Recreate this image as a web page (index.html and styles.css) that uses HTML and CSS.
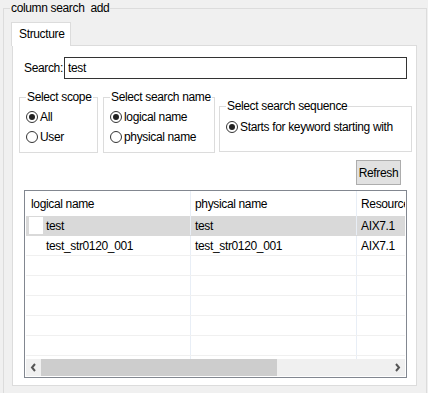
FILE: index.html
```html
<!DOCTYPE html>
<html lang="en">
<head>
    <meta charset="UTF-8">
    <meta name="viewport" content="width=device-width, initial-scale=1.0">
    <title>column search add</title>
    <link rel="stylesheet" href="styles.css">
</head>
<body>
    <fieldset class="outer">
        <legend>column search&nbsp; add</legend>

        <!-- Tab strip -->
        <div class="tabs">
            <div class="tab active">Structure</div>
        </div>

        <div class="panel">
            <!-- Search box -->
            <div class="search-row">
                <label for="keyword">Search:</label>
                <input type="text" id="keyword" value="test">
            </div>

            <!-- Option groups -->
            <div class="options">
                <fieldset class="group scope">
                    <legend>Select scope</legend>
                    <div class="radio checked"><span class="dot"></span>All</div>
                    <div class="radio"><span class="dot"></span>User</div>
                </fieldset>
                <fieldset class="group name">
                    <legend>Select search name</legend>
                    <div class="radio checked"><span class="dot"></span>logical name</div>
                    <div class="radio"><span class="dot"></span>physical name</div>
                </fieldset>
                <fieldset class="group sequence">
                    <legend>Select search sequence</legend>
                    <div class="radio checked"><span class="dot"></span>Starts for keyword starting with</div>
                </fieldset>
            </div>

            <div class="actions">
                <button class="btn">Refresh</button>
            </div>

            <!-- Result grid -->
            <div class="grid">
                <div class="grid-view">
                    <div class="row head">
                        <div class="cell c1">logical name</div>
                        <div class="cell c2">physical name</div>
                        <div class="cell c3">Resource</div>
                    </div>
                    <div class="row selected">
                        <div class="cell c1 indent"><span class="icon"></span>test</div>
                        <div class="cell c2">test</div>
                        <div class="cell c3">AIX7.1</div>
                    </div>
                    <div class="row">
                        <div class="cell c1 indent">test_str0120_001</div>
                        <div class="cell c2">test_str0120_001</div>
                        <div class="cell c3">AIX7.1</div>
                    </div>
                    <div class="row"><div class="cell c1"></div><div class="cell c2"></div><div class="cell c3"></div></div>
                    <div class="row"><div class="cell c1"></div><div class="cell c2"></div><div class="cell c3"></div></div>
                    <div class="row"><div class="cell c1"></div><div class="cell c2"></div><div class="cell c3"></div></div>
                    <div class="row"><div class="cell c1"></div><div class="cell c2"></div><div class="cell c3"></div></div>
                    <div class="row"><div class="cell c1"></div><div class="cell c2"></div><div class="cell c3"></div></div>
                    <div class="row"><div class="cell c1"></div><div class="cell c2"></div><div class="cell c3"></div></div>
                </div>
                <div class="hscroll">
                    <div class="arrow">
                        <svg width="7" height="9" viewBox="0 0 7 9"><path d="M5 1 L2 4.5 L5 8" fill="none" stroke="#555" stroke-width="2"/></svg>
                    </div>
                    <div class="track">
                        <div class="thumb"></div>
                    </div>
                    <div class="arrow">
                        <svg width="7" height="9" viewBox="0 0 7 9"><path d="M2 1 L5 4.5 L2 8" fill="none" stroke="#555" stroke-width="2"/></svg>
                    </div>
                </div>
            </div>
        </div>
    </fieldset>
</body>
</html>
```

FILE: styles.css
```css
body {
    font-family: "Liberation Sans", Arial, sans-serif;
    font-size: 12px;
    letter-spacing: -0.35px;
    margin: 0;
    padding: 0;
    background-color: #f0f0f0;
    color: #000;
    width: 428px;
    height: 393px;
    overflow: hidden;
}
legend {
    padding: 0 1px;
    line-height: 16px;
    white-space: nowrap;
}
.outer {
    margin: 0 1px 0 3px;
    padding: 6px 9px 20px 6px;
    border: 1px solid #dcdcdc;
    min-width: 0;
}
.tabs {
    display: flex;
    margin-left: 1px;
}
.tab {
    position: relative;
    width: 60px;
    height: 24px;
    box-sizing: border-box;
    padding: 4px 0 0 7px;
    border: 1px solid #dcdcdc;
    border-bottom: none;
    background-color: #fff;
    margin-bottom: -1px;
    z-index: 1;
}
.panel {
    height: 341px;
    box-sizing: border-box;
    margin-left: 2px;
    border: 1px solid #dcdcdc;
    background-color: #fff;
    padding: 11px 9px 0 11px;
}
.search-row {
    display: flex;
    align-items: center;
    height: 22px;
}
.search-row label {
    width: 40px;
    flex: none;
}
.search-row input {
    flex: 1;
    min-width: 0;
    height: 22px;
    box-sizing: border-box;
    border: 1px solid #333;
    padding: 0 3px;
    font-family: inherit;
    font-size: 12px;
    letter-spacing: -0.35px;
    outline: none;
}
.options {
    display: flex;
    align-items: flex-start;
    gap: 5px;
    margin: 10px 0 0 -5px;
}
.group {
    flex: none;
    margin: 0;
    border: 1px solid #dcdcdc;
    padding: 2px 4px 4px 6px;
    min-width: 0;
    box-sizing: border-box;
}
.scope { width: 79px; height: 64px; }
.name { width: 112px; height: 64px; }
.sequence {
    width: 193px;
    height: 54px;
    margin-top: 9px;
    margin-left: -1px;
    padding-top: 3px;
}
.radio {
    display: flex;
    align-items: center;
    height: 20px;
    white-space: nowrap;
}
.dot {
    flex: none;
    width: 12px;
    height: 12px;
    box-sizing: border-box;
    border: 1px solid #333;
    border-radius: 50%;
    margin-right: 2px;
    display: flex;
    align-items: center;
    justify-content: center;
}
.checked .dot::after {
    content: "";
    width: 6px;
    height: 6px;
    border-radius: 50%;
    background-color: #222;
}
.actions {
    display: flex;
    justify-content: flex-end;
    margin: 7px 6px 0 0;
}
.btn {
    width: 45px;
    height: 25px;
    background-color: #e1e1e1;
    border: 1px solid #adadad;
    font-family: inherit;
    font-size: 12px;
    letter-spacing: -0.35px;
    padding: 0;
    color: #000;
}
.grid {
    margin-top: 5px;
    height: 188px;
    box-sizing: border-box;
    border: 1px solid #828790;
    padding: 0 1px 1px 1px;
    display: flex;
    flex-direction: column;
}
.grid-view {
    flex: 1;
    overflow: hidden;
}
.row {
    display: flex;
    height: 19px;
    border-bottom: 1px solid #f0f0f0;
}
.row.head {
    height: 25px;
    border-bottom: none;
    align-items: center;
}
.row.selected {
    background-color: #d9d9d9;
    border-bottom-color: #d9d9d9;
}
.cell {
    flex: none;
    box-sizing: border-box;
    display: flex;
    align-items: center;
    white-space: nowrap;
    overflow: hidden;
    padding-left: 4px;
    height: 100%;
    border-right: 1px solid #e8eef6;
}
.c1 { width: 165px; padding-left: 5px; }
.c2 { width: 166px; }
.c3 { width: 60px; border-right: none; }
.cell.indent { padding-left: 20px; position: relative; }
.icon {
    position: absolute;
    left: 3px;
    top: 1px;
    width: 14px;
    height: 17px;
    background-color: #fff;
}
.hscroll {
    display: flex;
    height: 17px;
    background-color: #f0f0f0;
}
.arrow {
    width: 15px;
    display: flex;
    align-items: center;
    justify-content: center;
}
.track {
    flex: 1;
    display: flex;
}
.thumb {
    width: 236px;
    background-color: #cdcdcd;
}
```
